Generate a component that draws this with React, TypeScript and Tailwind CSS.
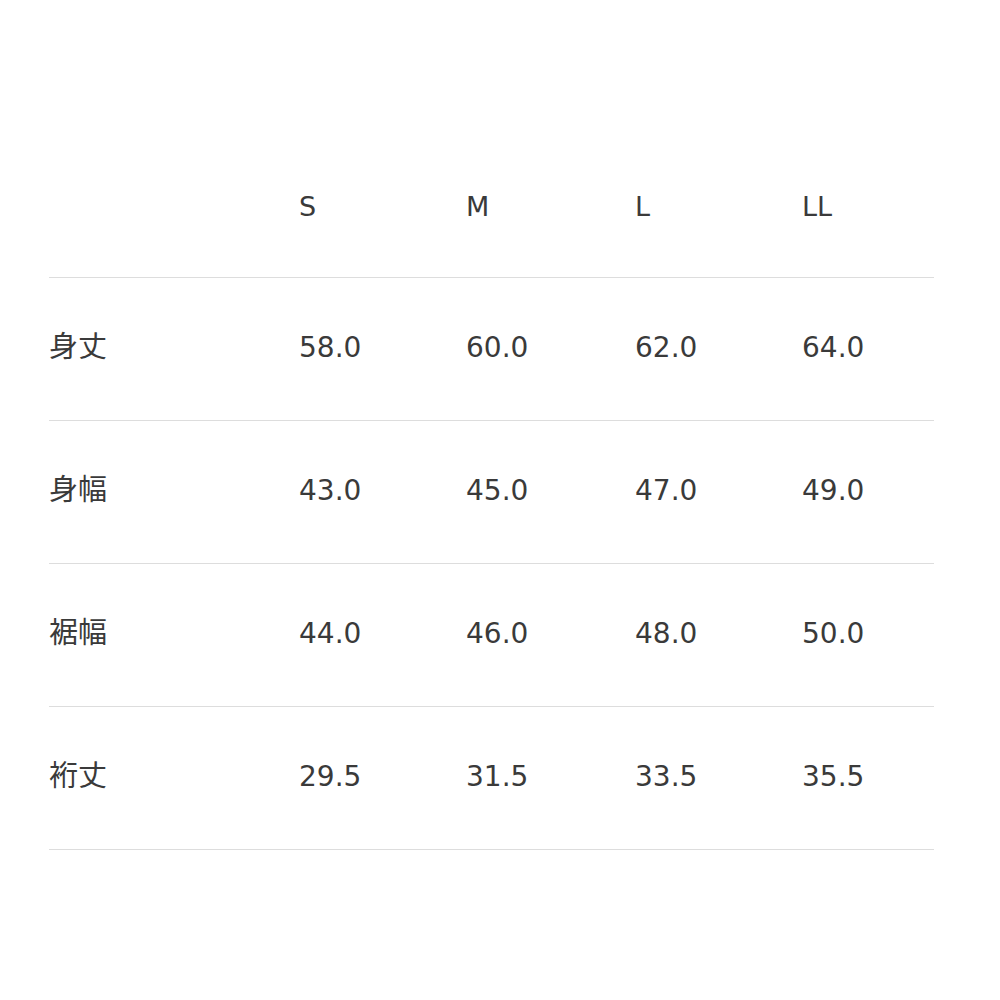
import React from 'react';

const sizes = ['S', 'M', 'L', 'LL'];

const rows: { label: string; values: string[] }[] = [
  { label: '身丈', values: ['58.0', '60.0', '62.0', '64.0'] },
  { label: '身幅', values: ['43.0', '45.0', '47.0', '49.0'] },
  { label: '裾幅', values: ['44.0', '46.0', '48.0', '50.0'] },
  { label: '裄丈', values: ['29.5', '31.5', '33.5', '35.5'] },
];

const cols = 'grid grid-cols-[250px_167px_169px_167px_1fr] items-center';

export default function App() {
  return (
    <div
      className="w-[1000px] h-[1000px] bg-white pt-[136px] pl-[49px] pr-[66px] text-[#3a3a3a]"
      style={{ fontFamily: '"DejaVu Sans", "Noto Sans CJK JP", sans-serif' }}
    >
      <div className={`${cols} h-[142px] border-b border-[#dddddd] text-[27px]`}>
        <div />
        {sizes.map((s) => (
          <div key={s} className="mt-[2px]">{s}</div>
        ))}
      </div>
      {rows.map((r) => (
        <div key={r.label} className={`${cols} h-[143px] border-b border-[#dddddd] text-[28px]`}>
          <div className="-mt-[2px] text-[29px]">{r.label}</div>
          {r.values.map((v) => (
            <div key={v} className="-mt-[2px]">{v}</div>
          ))}
        </div>
      ))}
    </div>
  );
}
